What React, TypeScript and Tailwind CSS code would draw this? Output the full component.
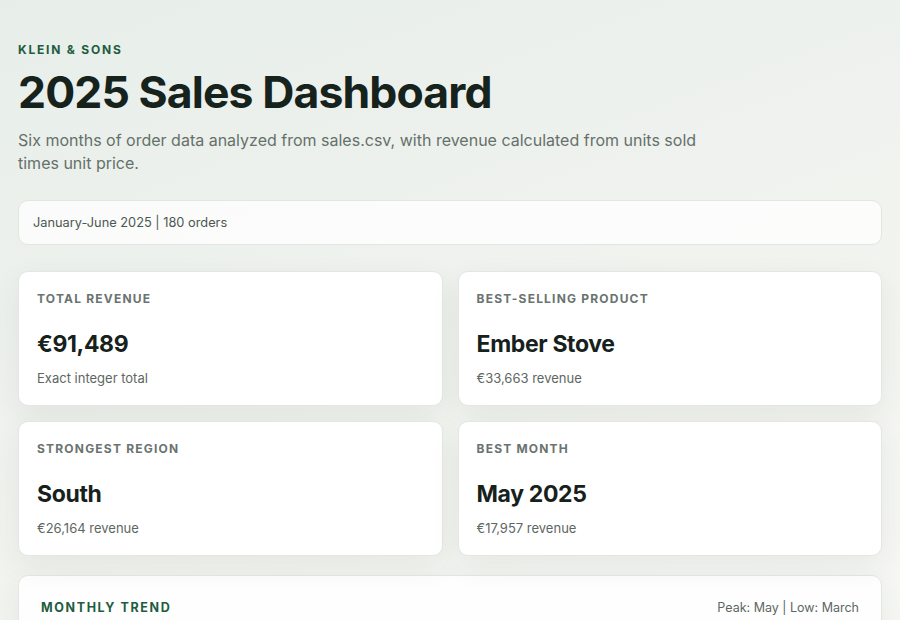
const stats = [
  { label: 'Total Revenue', value: '€91,489', note: 'Exact integer total' },
  { label: 'Best-Selling Product', value: 'Ember Stove', note: '€33,663 revenue' },
  { label: 'Strongest Region', value: 'South', note: '€26,164 revenue' },
  { label: 'Best Month', value: 'May 2025', note: '€17,957 revenue' },
]

export default function App() {
  return (
    <main
      className="min-h-screen bg-[linear-gradient(160deg,#e7eee9_0%,#f1f3ef_45%,#fafaf7_100%)] text-[#17211c]"
      style={{ fontFamily: 'Inter, "Noto Sans", sans-serif' }}
    >
      <div className="px-[18px] pt-[41px] pb-10">
        {/* Header */}
        <p className="text-[12px] font-bold uppercase tracking-[0.15em] text-[#1f5c40]">Klein &amp; Sons</p>
        <h1 className="mt-[7px] text-[44.5px] leading-[52px] font-bold tracking-[-0.02em] text-[#16221c]">
          2025 Sales Dashboard
        </h1>
        <p className="mt-[11px] max-w-[700px] text-[16px] leading-[23px] text-[#65706a]">
          Six months of order data analyzed from sales.csv, with revenue calculated from units sold times unit price.
        </p>

        {/* Period bar */}
        <div className="mt-[25px] h-[45px] flex items-center px-[14px] rounded-[10px] border border-[#e2e6e2] bg-white/75 text-[12.8px] text-[#4d5752]">
          January-June 2025 | 180 orders
        </div>

        {/* Stat cards */}
        <div className="mt-[26px] grid grid-cols-2 gap-[15px]">
          {stats.map((s) => (
            <div
              key={s.label}
              className="h-[135px] rounded-[10px] border border-[#e4e6e3] bg-white px-[18px] pt-[19px] shadow-[0_10px_30px_rgba(40,50,40,0.07)]"
            >
              <p className="text-[12px] leading-4 font-bold uppercase tracking-[0.1em] text-[#6a736f]">{s.label}</p>
              <p className="mt-[22px] text-[23px] leading-[30px] font-bold tracking-[-0.015em] text-[#17211c]">{s.value}</p>
              <p className="mt-[10px] text-[13px] text-[#5d6762]">{s.note}</p>
            </div>
          ))}
        </div>

        {/* Monthly trend */}
        <div className="mt-[19px] rounded-[10px] border border-[#e4e6e3] bg-white/90 px-[22px] pt-[23px] pb-6 shadow-[0_10px_30px_rgba(40,50,40,0.07)]">
          <div className="flex items-center justify-between">
            <p className="text-[12.5px] font-bold uppercase tracking-[0.13em] text-[#1f5c40]">Monthly Trend</p>
            <p className="text-[12.5px] text-[#5d6762]">Peak: May | Low: March</p>
          </div>
          <div className="h-40" />
        </div>
      </div>
    </main>
  )
}
